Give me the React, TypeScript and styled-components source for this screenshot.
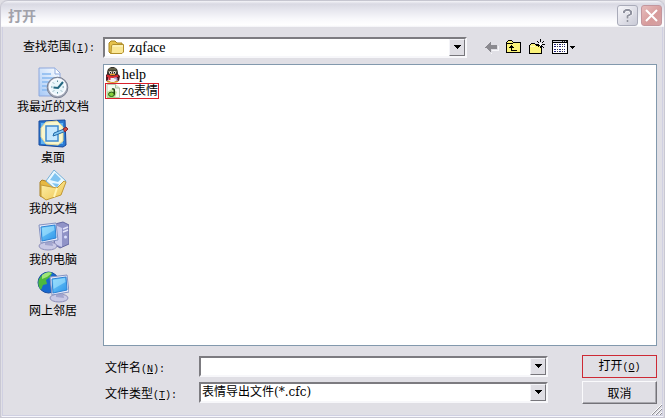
import React from "react";
import styled, { createGlobalStyle, css } from "styled-components";

const GlobalStyle = createGlobalStyle`
  * { box-sizing: border-box; }
  body {
    margin: 0;
    background: #e0dfe5;
    color: #000;
    font: 12px/14px "Noto Sans CJK SC", sans-serif;
  }
  button, input, select { font: inherit; color: inherit; margin: 0; }
`;

const Latin = styled.span`
  font-family: "Liberation Mono", monospace;
  font-size: 10px;
`;

const FileName = styled.span`
  font-family: "Liberation Serif", serif;
  font-size: 14px;
`;

const Dialog = styled.main`
  display: flex;
  flex-direction: column;
  min-height: 100vh;
  background: #e0dfe5;
  border: solid #c9c8d3;
  border-width: 0 1px 1px;
  border-radius: 7px 7px 0 0;
`;

const TitleBar = styled.header`
  display: flex;
  align-items: center;
  gap: 3px;
  height: 27px;
  padding: 2px 2px 0 7px;
  border-radius: 7px 7px 0 0;
  border-top: 1px solid #c6c6d0;
  background: linear-gradient(#f4f4f8 0, #d9d9e3 3px, #e4e4ec 8px, #f8f8fb 18px, #ffffff 24px, #f2f2f6 100%);
`;

const Title = styled.h1`
  flex: 1;
  margin: 0;
  font-size: 14px;
  line-height: 20px;
  font-weight: 700;
  color: #a1a1aa;
`;

const CaptionButton = styled.button<{ $danger?: boolean }>`
  display: grid;
  place-items: center;
  width: 21px;
  height: 21px;
  padding: 0;
  border: 1px solid ${(p) => (p.$danger ? "#c3969d" : "#a9abb9")};
  border-radius: 3px;
  background: ${(p) =>
    p.$danger
      ? "linear-gradient(135deg, #e6bcbc, #d79b9b 60%, #d5a2a4)"
      : "linear-gradient(135deg, #f6f6fa, #dcdce5 60%, #c9cad6)"};
`;

const Content = styled.div`
  display: flex;
  flex: 1;
  flex-direction: column;
  margin: 0 1px 1px;
  padding: 10px 5px 11px 0;
  border: solid #d0d0e2;
  border-width: 0 1px 1px;
  box-shadow: 0 1px 0 #f6f6fc;
`;

const LookRow = styled.div`
  display: grid;
  grid-template-columns: 100px minmax(120px, 364px) 1fr;
  align-items: center;
`;

const LookLabel = styled.label`
  padding-left: 20px;
  line-height: 16px;
  white-space: nowrap;
`;

const sunken = css`
  height: 21px;
  background: #fff;
  border: 2px solid;
  border-color: #7c7b80 #f7f7fa #f7f7fa #7c7b80;
`;

const Combo = styled.div`
  display: grid;
  grid-template-columns: 1fr 16px;
  min-width: 0;
  ${sunken}
`;

const field = css`
  grid-area: 1 / 1 / 2 / 3;
  width: 100%;
  height: 17px;
  border: 0;
  outline: 0;
  background: transparent;
  appearance: none;
`;

const FolderSelect = styled.select`
  ${field}
  padding: 0 20px 0 24px;
  font: 14px/17px "Liberation Serif", serif;
`;

const TypeSelect = styled.select`
  ${field}
  padding: 0 20px 0 1px;
  font: 12px/17px "DejaVu Serif", "Noto Sans CJK SC", serif;
`;

const NameInput = styled.input`
  ${field}
  padding: 0 20px 0 2px;
`;

const FolderMark = styled.span`
  display: grid;
  grid-area: 1 / 1;
  place-self: center start;
  padding-left: 3px;
  pointer-events: none;
`;

const DropMark = styled.span`
  display: grid;
  grid-area: 1 / 2;
  place-items: center;
  width: 16px;
  height: 17px;
  background: #dfdee4;
  border: 1px solid;
  border-color: #f4f4f8 #77767b #77767b #f4f4f8;
  pointer-events: none;
`;

const Toolbar = styled.div`
  display: flex;
  padding-left: 13px;
`;

const ToolButton = styled.button<{ $wide?: boolean }>`
  display: grid;
  place-items: center;
  width: ${(p) => (p.$wide ? 30 : 23)}px;
  height: 21px;
  padding: 0;
  border: 0;
  background: none;
`;

const Middle = styled.div`
  display: grid;
  grid-template-columns: 100px 1fr;
  flex: 1;
  margin-top: 6px;
`;

const Places = styled.nav`
  display: flex;
  flex-direction: column;
  gap: 5px;
  padding-top: 3px;
`;

const Place = styled.button`
  display: flex;
  flex-direction: column;
  align-items: center;
  width: 100%;
  padding: 0;
  border: 0;
  background: none;
  line-height: 14px;
`;

const FileList = styled.ul`
  display: flex;
  flex-direction: column;
  align-items: flex-start;
  margin: 0;
  padding: 1px;
  min-height: 260px;
  list-style: none;
  background: #fff;
  border: 1px solid #8299ad;
`;

const FileItem = styled.li<{ $marked?: boolean }>`
  display: flex;
  align-items: center;
  gap: 2px;
  height: ${(p) => (p.$marked ? 16 : 17)}px;
  border: ${(p) => (p.$marked ? "1px solid #d8202c" : "0 solid")};
`;

const Footer = styled.form`
  display: grid;
  grid-template-columns: 96px 1fr 75px;
  align-items: start;
  row-gap: 3px;
  margin: 9px 0 0 100px;
`;

const FooterLabel = styled.label`
  padding: 4px 0 0 2px;
  line-height: 16px;
  white-space: nowrap;
`;

const FooterCombo = styled(Combo)`
  margin: 1px 34px 0 0;
`;

const ActionButton = styled.button<{ $marked?: boolean }>`
  height: 23px;
  padding: 0;
  line-height: 16px;
  background: #e0dfe5;
  border: ${(p) => (p.$marked ? "1px solid #cd2a35" : "1px solid")};
  ${(p) =>
    !p.$marked &&
    css`
      border-color: #fafafc #737278 #737278 #fafafc;
      box-shadow: inset -1px -1px #a9a8ae;
    `}
`;

const Grip = styled.svg`
  position: absolute;
  right: 3px;
  bottom: 3px;
`;

const Frame = styled.div`
  position: relative;
`;

const Caret = () => (
  <svg width="9" height="5" shapeRendering="crispEdges" aria-hidden="true">
    <path d="M1 0h7v1h-1v1h-1v1h-1v1h-1v-1h-1v-1h-1v-1h-1z" />
  </svg>
);

const FolderIcon = () => (
  <svg width="17" height="15" viewBox="0 0 17 15" aria-hidden="true">
    <path d="M1 12V3l2-2h4l2 2h5v10H2z" fill="#e6c24b" stroke="#a98522" />
    <path d="M3 13 3.5 5.5 5 4.5h10.5V12l-1.500 1.500H2.500z" fill="#fae795" stroke="#b3902c" />
    <path d="M4.500 6H15" stroke="#fffbd5" />
  </svg>
);

const BackIcon = () => (
  <svg width="17" height="17" shapeRendering="crispEdges" aria-hidden="true">
    <path d="M3 9h1v1h1v1h1v1h1v1h1v1h1v-3h6v-4h1v5H9v3H8V9z" fill="#f7f7fa" />
    <path d="M2 8h1V7h1V6h1V5h1V4h1V3h1v3h6v4H8v3H7v-1H6v-1H5v-1H4V9H2z" fill="#8b8a90" />
  </svg>
);

const UpIcon = () => (
  <svg width="17" height="17" shapeRendering="crispEdges" aria-hidden="true">
    <path d="M0 3h1V2h1V1h4v1h1v1h8v11H0z" />
    <path d="M1 3h1V2h4v1h1v1h7v9H1z" fill="#fbf37b" />
    <path d="M1 4h6v1H1zM5 6h1v1h1v1h1v1H6v2h5v1H5V9H3V8h1V7h1z" />
  </svg>
);

const NewFolderIcon = () => (
  <svg width="17" height="17" shapeRendering="crispEdges" aria-hidden="true">
    <path d="M0 6h1V5h1V4h4v1h1v1h6v9H0z" />
    <path d="M1 6h1V5h4v1h1v1h5v7H1z" fill="#fbf37b" />
    <path d="M1 7h5v1H1z" fill="#fffac0" />
    <path d="M11 0h1v3h-1zM8 2h1v1H8zM9 3h1v1H9zM14 2h1v1h-1zM13 3h1v1h-1zM7 5h3v1H7zM13 5h3v1h-3zM9 7h1v1H9zM13 7h1v1h-1zM14 8h1v1h-1zM11 7h1v2h-1z" />
    <path d="M11 4h1v1h-1zM10 5h3v1h-3zM11 6h1v1h-1z" fill="#fff" />
  </svg>
);

const ViewIcon = () => (
  <svg width="24" height="17" shapeRendering="crispEdges" aria-hidden="true">
    <path d="M0 1h16v14H0z" />
    <path d="M1 4h14v10H1z" fill="#fff" />
    <path d="M1 2h14v1H1z" fill="#c9c9d6" />
    <path d="M10 2h1v1h-1zM12 2h1v1h-1zM14 2h1v1h-1z" fill="#222" />
    <path d="M2 5h2v1H2zM7 5h2v1H7zM12 5h1v1h-1zM2 7h2v1H2zM7 7h2v1H7zM12 7h1v1h-1zM2 10h2v1H2zM7 10h2v1H7zM12 10h1v1h-1zM2 12h2v1H2zM7 12h2v1H7zM12 12h1v1h-1z" fill="#25257e" />
    <path d="M5 5h1v1H5zM10 5h1v1h-1zM5 7h1v1H5zM10 7h1v1h-1zM5 10h1v1H5zM10 10h1v1h-1zM5 12h1v1H5zM10 12h1v1h-1z" fill="#33333c" />
    <path d="M18 7h5v1h-1v1h-1v1h-1V9h-1V8h-1z" />
  </svg>
);

const PenguinIcon = () => (
  <svg width="15" height="16" viewBox="0 0 15 16" aria-hidden="true">
    <ellipse cx="7.500" cy="14.500" rx="6" ry="1.500" fill="#d69a2c" />
    <path d="M1 8 3 6h9l3 3-1 5-3-1H4l-3 1z" fill="#4a1720" />
    <path d="M2 7c0-5 2-7 5.500-7S13 2 13 7l-2 3H4z" fill="#34302b" />
    <path d="M4 2h7M3 4.500h9" stroke="#6e6e52" strokeWidth="1.500" />
    <path d="M4 9h7l1 4-3 2H6l-3-2z" fill="#f1edf6" />
    <ellipse cx="5.500" cy="5.500" rx="1.500" ry="1.600" fill="#f7e7df" />
    <ellipse cx="9.500" cy="5.500" rx="1.500" ry="1.600" fill="#f7e7df" />
    <path d="M5.500 5v1.500M9.500 5v1.500" stroke="#111" />
    <path d="M5 7.500h5" stroke="#ee9e29" strokeWidth="1.300" />
    <path d="M2 8.500q5.500 3 11 0" fill="none" stroke="#dc2830" strokeWidth="2" />
    <path d="M4.500 10v3" stroke="#dc2830" strokeWidth="2" />
    <path d="M9 11h3v3" stroke="#9a82b5" fill="#cfc5df" />
  </svg>
);

const FaceFileIcon = () => (
  <svg width="14" height="14" viewBox="0 0 14 14" aria-hidden="true">
    <path d="M1 .5h8.500L13.500 4v9.500H1z" fill="#f4fbf0" stroke="#b5ccb0" />
    <path d="M9.500.5V4h4" fill="#dcefd4" stroke="#a9bca3" />
    <path d="M1 14V8l5-3 5 3-2 6z" fill="#9bd85e" opacity=".55" />
    <ellipse cx="5.500" cy="10.300" rx="3" ry="2.200" fill="#85cf3b" stroke="#285b16" />
    <path d="M8.300 10.500V6Q8 4.500 6 5" fill="none" stroke="#20420f" strokeWidth="1.500" />
  </svg>
);

const Screen = ({ x, y }: { x: number; y: number }) => (
  <g transform={`translate(${x} ${y})`}>
    <ellipse cx="10" cy="23" rx="9" ry="4" fill="#c9c9e5" stroke="#8e8fba" />
    <path d="m7 17 7 1 1 5-8-1z" fill="#a2a5ce" />
    <path d="M1 2 18 0l2 17-17 3z" fill="#e5e8f8" stroke="#8593c2" />
    <path d="m3 4 14-2 1 13-14 3z" fill="url(#screen)" stroke="#2e83d4" />
    <path d="m4 5 12-2 .5 4-12 7z" fill="#aee9ff" opacity=".55" />
  </g>
);

const RecentIcon = () => (
  <svg width="32" height="32" viewBox="0 0 32 32" aria-hidden="true">
    <path d="M2 1h16l5 5v23H2z" fill="url(#paper)" stroke="#8ea7dc" />
    <path d="M18 1v6h5" fill="#f9fcff" stroke="#90abdf" />
    <path d="M5 7h9M5 11h13M5 15h10M5 19h7M5 23h7" stroke="#86b8ef" strokeWidth="1.500" />
    <circle cx="20.500" cy="20.500" r="10.300" fill="#a1a7b6" stroke="#777e91" />
    <circle cx="20.500" cy="20" r="8" fill="#eaf6fb" stroke="#f7faff" strokeWidth="2" />
    <path d="M20.500 13.500v1.500M20.500 25v1.500M14 20h1.500M25.500 20H27M16 15.500l1 1M25 24.500l-1-1M16 24.500l1-1" stroke="#5c8c9c" />
    <path d="m16.500 20.500 4.500.5 5-6" fill="none" stroke="#236780" strokeWidth="2" />
  </svg>
);

const DesktopIcon = () => (
  <svg width="32" height="32" viewBox="0 0 32 32" aria-hidden="true">
    <path d="m2 3 26-1 1 25-3 2-24-2z" fill="#2b7ad2" stroke="#15479c" />
    <path d="M4 5h6l-6 8zM20 5h6v6zM4 18l7 8H4zM26 17v9h-7z" fill="#61b3f2" />
    <path d="m9 4 11-1 6 6v14l-5 4-12-1-5-7V10z" fill="#f9f7cd" stroke="#e1d89a" />
    <path d="M9 8h12v15H9z" fill="#c6e8ff" stroke="#3f8bd0" strokeWidth="1.500" />
    <path d="m17 15 10-4 2 2-10 4-3 1z" fill="#84c9f6" stroke="#226aa8" />
    <path d="m26 11 3-2 2 2-3 3z" fill="#cb4941" stroke="#8a2831" />
  </svg>
);

const DocumentsIcon = () => (
  <svg width="32" height="32" viewBox="0 0 32 32" aria-hidden="true">
    <path d="m3 13 2-2 7 2 12-5v17L9 30 3 27z" fill="#e7b942" stroke="#a98027" />
    <path d="m9 12 8-11 12 11-6 12z" fill="#e8f8ff" stroke="#76b0d8" />
    <path d="m13 11 5-7 6 6-3 3zM15 14l7 1-2 4z" fill="#7fc4f1" />
    <path d="m4 16 16 3 7-7 2 1-5 13-15 5-5-4z" fill="url(#folder)" stroke="#c29a38" />
    <path d="m20 19-3 9" stroke="#fff4b2" strokeWidth="2" />
  </svg>
);

const ComputerIcon = () => (
  <svg width="32" height="32" viewBox="0 0 32 32" aria-hidden="true">
    <path d="m18 4 8-2 6 3v19l-9 4-6-4z" fill="#9093c7" stroke="#6468a1" />
    <path d="m18 5 7 3v19l-7-3z" fill="#c8caeb" />
    <path d="m26 9 5-2M26 12l5-2" stroke="#e4e5fa" strokeWidth="1.500" />
    <circle cx="28.500" cy="17" r="1.500" fill="#dce1ff" />
    <Screen x={1} y={3} />
  </svg>
);

const NetworkIcon = () => (
  <svg width="32" height="32" viewBox="0 0 32 32" aria-hidden="true">
    <circle cx="11.500" cy="11.500" r="10.500" fill="#1769cf" stroke="#194da0" />
    <path d="M2 8c4-6 9-8 13-6l-2 4-4 3 1 4-4 1-2 5C1 16 1 11 2 8z" fill="#4cb83f" />
    <path d="M5 4q5-4 10-2l-5 4-5 2z" fill="#a0e577" />
    <Screen x={12} y={4} />
  </svg>
);

const places = [
  { name: "我最近的文档", Icon: RecentIcon },
  { name: "桌面", Icon: DesktopIcon },
  { name: "我的文档", Icon: DocumentsIcon },
  { name: "我的电脑", Icon: ComputerIcon },
  { name: "网上邻居", Icon: NetworkIcon },
];

const GradientDefs = styled.svg`
  display: block;
`;

const Gradients = () => (
  <GradientDefs width="0" height="0" aria-hidden="true">
    <defs>
      <linearGradient id="screen" x1="0" y1="0" x2="1" y2="1">
        <stop stopColor="#7ad2fa" />
        <stop offset="1" stopColor="#2d94ea" />
      </linearGradient>
      <linearGradient id="paper" x1="1" y1="0" x2="0" y2="1">
        <stop stopColor="#fff" />
        <stop offset="1" stopColor="#a5c8f6" />
      </linearGradient>
      <linearGradient id="folder" x1="0" y1="0" x2="1" y2="1">
        <stop stopColor="#fff3ac" />
        <stop offset="1" stopColor="#edc34f" />
      </linearGradient>
    </defs>
  </GradientDefs>
);

const Key = ({ k }: { k: string }) => (
  <Latin>
    (<u>{k}</u>)
  </Latin>
);

export default function App() {
  return (
    <Frame>
      <GlobalStyle />
      <Gradients />
      <Dialog>
        <TitleBar>
          <Title>打开</Title>
          <CaptionButton aria-label="帮助">
            <svg width="11" height="15" fill="none" aria-hidden="true">
              <path d="M2 5V3.500L4 2h3l2 1.500V6L5.500 8v2.500M5.500 12v2" stroke="#fff" strokeWidth="3" />
              <path d="M2 5V3.500L4 2h3l2 1.500V6L5.500 8v2.500M5.500 12v2" stroke="#8f919e" strokeWidth="2" />
            </svg>
          </CaptionButton>
          <CaptionButton $danger aria-label="关闭">
            <svg width="15" height="15" aria-hidden="true">
              <path d="m2 2 11 11M13 2 2 13" stroke="#fff" strokeWidth="2" />
            </svg>
          </CaptionButton>
        </TitleBar>
        <Content>
          <LookRow>
            <LookLabel htmlFor="folder">
              查找范围
              <Key k="I" />
              <Latin>:</Latin>
            </LookLabel>
            <Combo>
              <FolderSelect id="folder">
                <option>zqface</option>
              </FolderSelect>
              <FolderMark>
                <FolderIcon />
              </FolderMark>
              <DropMark>
                <Caret />
              </DropMark>
            </Combo>
            <Toolbar>
              <ToolButton aria-label="后退" disabled>
                <BackIcon />
              </ToolButton>
              <ToolButton aria-label="向上一级">
                <UpIcon />
              </ToolButton>
              <ToolButton aria-label="新建文件夹">
                <NewFolderIcon />
              </ToolButton>
              <ToolButton $wide aria-label="查看">
                <ViewIcon />
              </ToolButton>
            </Toolbar>
          </LookRow>
          <Middle>
            <Places>
              {places.map(({ name, Icon }) => (
                <Place key={name}>
                  <Icon />
                  {name}
                </Place>
              ))}
            </Places>
            <FileList>
              <FileItem>
                <PenguinIcon />
                <FileName>help</FileName>
              </FileItem>
              <FileItem $marked>
                <FaceFileIcon />
                <span>
                  <Latin>ZQ</Latin>表情
                </span>
              </FileItem>
            </FileList>
          </Middle>
          <Footer onSubmit={(e) => e.preventDefault()}>
            <FooterLabel htmlFor="filename">
              文件名
              <Key k="N" />
              <Latin>:</Latin>
            </FooterLabel>
            <FooterCombo>
              <NameInput id="filename" type="text" />
              <DropMark>
                <Caret />
              </DropMark>
            </FooterCombo>
            <ActionButton $marked type="submit">
              打开
              <Key k="O" />
            </ActionButton>
            <FooterLabel htmlFor="filetype">
              文件类型
              <Key k="T" />
              <Latin>:</Latin>
            </FooterLabel>
            <FooterCombo>
              <TypeSelect id="filetype">
                <option>表情导出文件(*.cfc)</option>
              </TypeSelect>
              <DropMark>
                <Caret />
              </DropMark>
            </FooterCombo>
            <ActionButton type="button">取消</ActionButton>
          </Footer>
        </Content>
      </Dialog>
      <Grip width="12" height="12" aria-hidden="true">
        <path d="M1 12 12 1M5 12l7-7M9 12l3-3" stroke="#fff" />
        <path d="M2 12 12 2M6 12l6-6M10 12l2-2" stroke="#8e8d94" />
      </Grip>
    </Frame>
  );
}
